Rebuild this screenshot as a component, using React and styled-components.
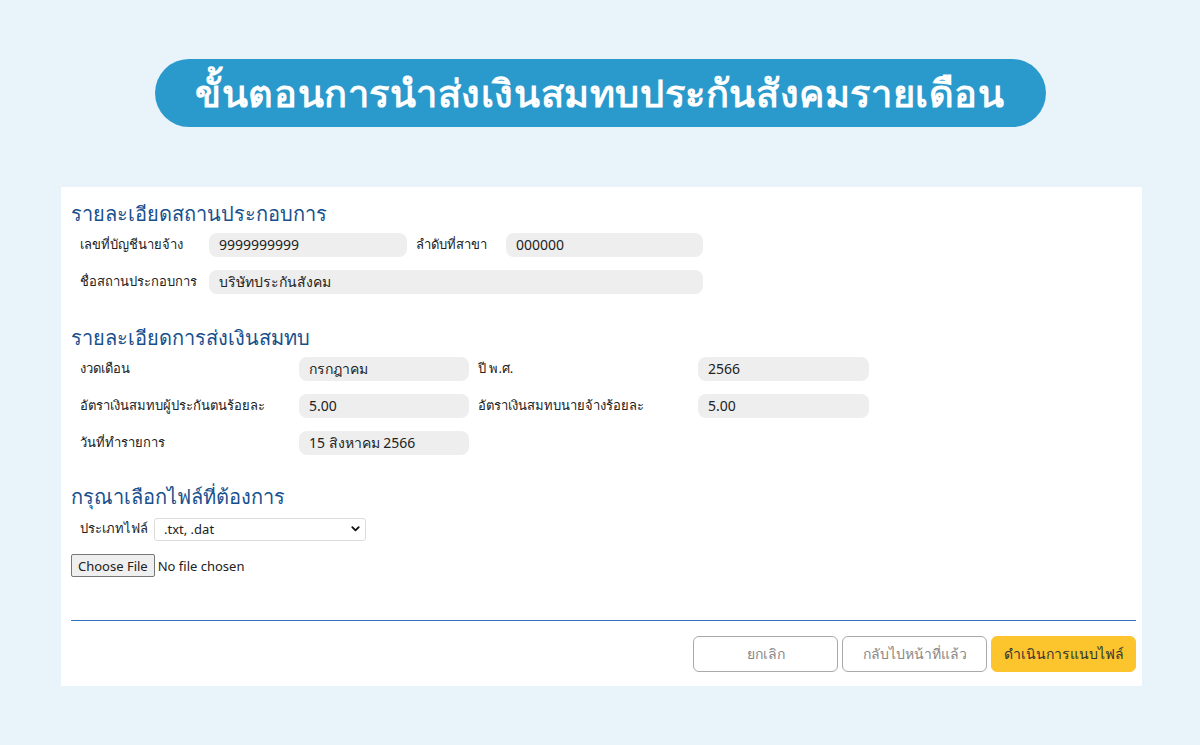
import React from "react";
import styled, { createGlobalStyle } from "styled-components";

const GlobalStyle = createGlobalStyle`
  html, body {
    margin: 0;
    padding: 0;
    background: #e8f3fa;
    font-family: "Noto Sans", "Liberation Sans", sans-serif;
  }
`;

export default function App() {
  return (
    <Page>
      <GlobalStyle />
      <HeaderWrap>
        <Pill>ขั้นตอนการนำส่งเงินสมทบประกันสังคมรายเดือน</Pill>
      </HeaderWrap>
      <Panel>
        <SectionTitle>รายละเอียดสถานประกอบการ</SectionTitle>
        <Rows>
          <Row>
            <Label $w={129}>เลขที่บัญชีนายจ้าง</Label>
            <Value $w={198}>9999999999</Value>
            <Label $w={90} $gap={9}>ลำดับที่สาขา</Label>
            <Value $w={197}>000000</Value>
          </Row>
          <Row>
            <Label $w={129}>ชื่อสถานประกอบการ</Label>
            <Value $w={494}>บริษัทประกันสังคม</Value>
          </Row>
        </Rows>

        <SectionTitle $top={31}>รายละเอียดการส่งเงินสมทบ</SectionTitle>
        <Rows>
          <Row>
            <Label $w={219}>งวดเดือน</Label>
            <Value $w={170}>กรกฎาคม</Value>
            <Label $w={220} $gap={9}>ปี พ.ศ.</Label>
            <Value $w={171}>2566</Value>
          </Row>
          <Row>
            <Label $w={219}>อัตราเงินสมทบผู้ประกันตนร้อยละ</Label>
            <Value $w={170}>5.00</Value>
            <Label $w={220} $gap={9}>อัตราเงินสมทบนายจ้างร้อยละ</Label>
            <Value $w={171}>5.00</Value>
          </Row>
          <Row>
            <Label $w={219}>วันที่ทำรายการ</Label>
            <Value $w={170}>15 สิงหาคม 2566</Value>
          </Row>
        </Rows>

        <SectionTitle $top={29}>กรุณาเลือกไฟล์ที่ต้องการ</SectionTitle>
        <FileTypeRow>
          <Label $w={74}>ประเภทไฟล์</Label>
          <SelectBox>
            <Select defaultValue="txt">
              <option value="txt">.txt, .dat</option>
            </Select>
            <Chevron viewBox="0 0 12 12">
              <path d="M2.5 4.5 L6 8 L9.5 4.5" fill="none" stroke="#111" strokeWidth="2" strokeLinecap="round" strokeLinejoin="round" />
            </Chevron>
          </SelectBox>
        </FileTypeRow>
        <FileInput type="file" />

        <Divider />
        <Actions>
          <Button>ยกเลิก</Button>
          <Button>กลับไปหน้าที่แล้ว</Button>
          <Button $primary>ดำเนินการแนบไฟล์</Button>
        </Actions>
      </Panel>
    </Page>
  );
}

const Page = styled.div`
  width: 1200px;
  height: 745px;
  overflow: hidden;
`;

const HeaderWrap = styled.div`
  display: flex;
  justify-content: center;
  padding-top: 59px;
`;

const Pill = styled.div`
  width: 891px;
  height: 68px;
  border-radius: 34px;
  background: #2a9acd;
  color: #fff;
  font-size: 38px;
  font-weight: 700;
  display: flex;
  align-items: center;
  justify-content: center;
  letter-spacing: 0.6px;
`;

const Panel = styled.section`
  margin: 60px 0 0 61px;
  width: 1081px;
  height: 499px;
  box-sizing: border-box;
  background: #fff;
  padding: 14px 6px 0 9px;
  display: flex;
  flex-direction: column;
`;

const SectionTitle = styled.h2`
  margin: ${(p) => p.$top || 0}px 0 0 1px;
  font-size: 20px;
  font-weight: 500;
  line-height: 26px;
  color: #17508d;
`;

const Rows = styled.div`
  display: flex;
  flex-direction: column;
  gap: 13px;
  margin-top: 6px;
  padding-left: 10px;
`;

const Row = styled.div`
  display: flex;
  align-items: center;
  height: 24px;
`;

const Label = styled.div`
  width: ${(p) => p.$w}px;
  margin-left: ${(p) => p.$gap || 0}px;
  font-size: 13px;
  color: #222;
  line-height: 20px;
  margin-top: -2px;
  white-space: nowrap;
`;

const Value = styled.div`
  width: ${(p) => p.$w}px;
  height: 24px;
  box-sizing: border-box;
  border-radius: 8px;
  background: #eeeeee;
  padding-left: 10px;
  font-size: 14px;
  color: #222;
  line-height: 24px;
`;

const FileTypeRow = styled.div`
  display: flex;
  align-items: center;
  margin-top: 7px;
  padding-left: 10px;
`;

const SelectBox = styled.div`
  position: relative;
  width: 212px;
  height: 23px;
`;

const Select = styled.select`
  appearance: none;
  width: 100%;
  height: 100%;
  border: 1px solid #dcdcdc;
  border-radius: 3px;
  background: #fff;
  padding: 0 0 0 9px;
  font-family: "Noto Sans", "Liberation Sans", sans-serif;
  font-size: 13px;
  color: #222;
`;

const Chevron = styled.svg`
  position: absolute;
  right: 5px;
  top: 6px;
  width: 11px;
  height: 11px;
  pointer-events: none;
`;

const FileInput = styled.input`
  margin: 14px 0 0 1px;
  font-family: "Noto Sans", "Liberation Sans", sans-serif;
  font-size: 13px;
  color: #222;
  &::file-selector-button {
    font-family: inherit;
    font-size: 13px;
    height: 23px;
    padding: 0 6px;
    margin-right: 3px;
    border: 1px solid #777;
    border-radius: 2px;
    background: #efefef;
    color: #222;
  }
`;

const Divider = styled.hr`
  margin: 43px 0 0 1px;
  border: 0;
  border-top: 1px solid #3471b9;
`;

const Actions = styled.div`
  display: flex;
  justify-content: flex-end;
  gap: 4px;
  margin-top: 15px;
`;

const Button = styled.button`
  width: 145px;
  height: 36px;
  border-radius: 6px;
  border: 1px solid ${(p) => (p.$primary ? "#fcc52d" : "#a9a9a9")};
  background: ${(p) => (p.$primary ? "#fcc52d" : "#fff")};
  color: ${(p) => (p.$primary ? "#333" : "#888")};
  font-family: "Noto Sans", "Liberation Sans", sans-serif;
  font-size: 14px;
  font-weight: ${(p) => (p.$primary ? 500 : 400)};
`;
